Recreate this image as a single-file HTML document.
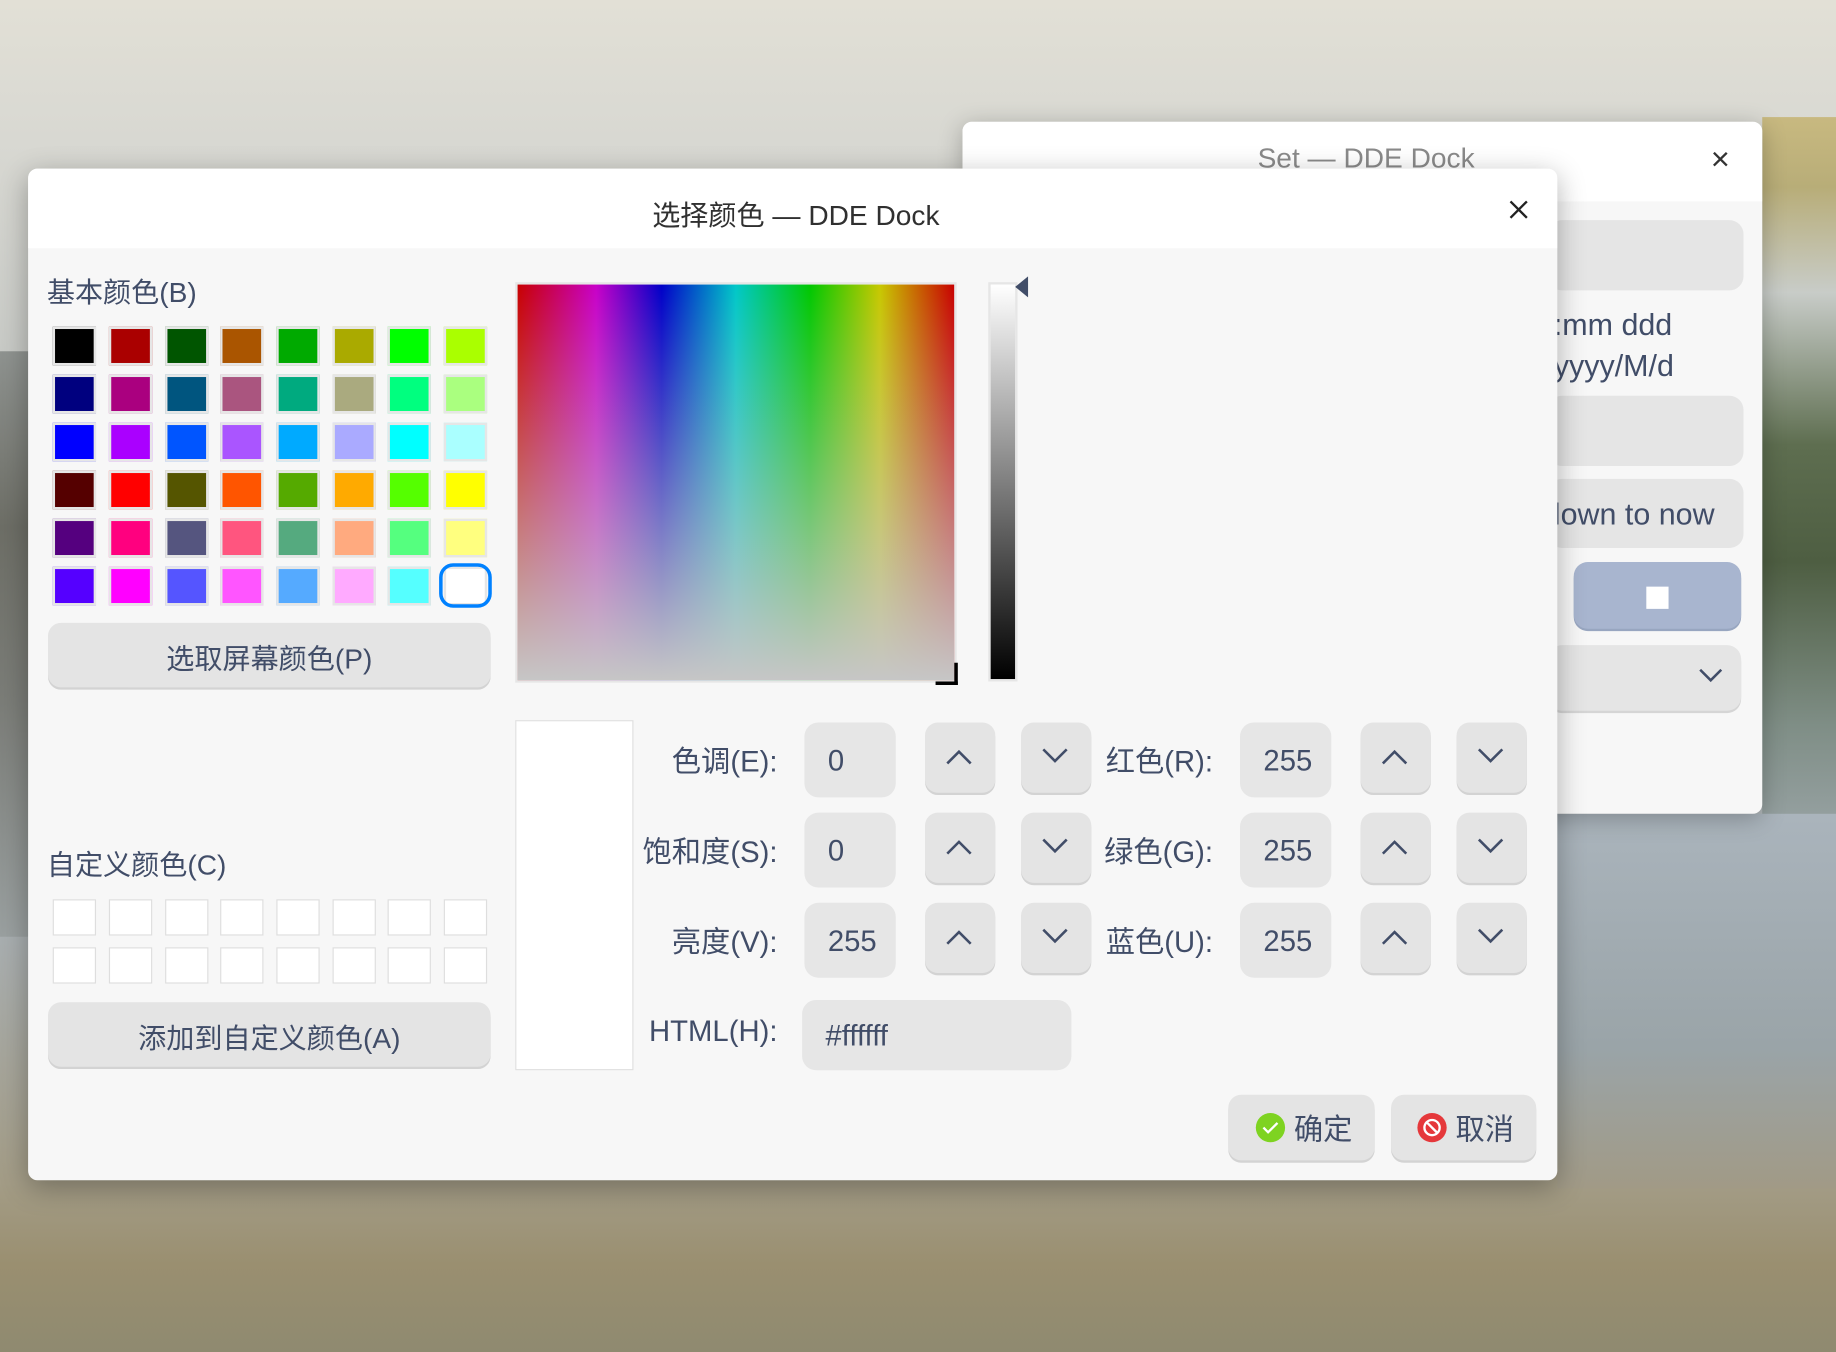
<!DOCTYPE html>
<html><head><meta charset="utf-8"><style>
html,body{margin:0;padding:0;width:1836px;height:1352px;overflow:hidden}
#w{position:absolute;left:0;top:0;width:1568px;height:1155px;transform:scale(1.17092);transform-origin:0 0;font-family:"Liberation Sans","Noto Sans CJK SC",sans-serif;color:#414d68;
background:
linear-gradient(180deg,#e2e0d6 0,#d8d8d2 120px,#c8cac6 300px,#b8bcbc 560px,#a9b0b4 780px,#a39c86 1010px,#9a8f70 1080px,#8f8a70 1155px);}
.a{position:absolute;box-sizing:border-box}
.t{position:absolute;white-space:nowrap}
.sw{position:absolute;width:37px;height:33px;border:2px solid #e6e6e6;box-sizing:border-box}
.cs{position:absolute;width:37px;height:31px;border:1px solid #dedede;background:#fff;box-sizing:border-box}
.btn{position:absolute;background:#e4e4e4;border-radius:11px;box-shadow:0 2px 0 #d3d3d3;box-sizing:border-box}
.inp{position:absolute;background:#e6e6e6;border-radius:12px;font-size:25px;line-height:64px;padding-left:20px;box-sizing:border-box}
.lb{position:absolute;font-size:25px;text-align:right;width:150px}
</style></head><body><div id="w">
<div class="a" style="left:0;top:300px;width:30px;height:500px;background:linear-gradient(180deg,#8f9390,#6d6e66 150px,#7b7d78 300px,#9aa0a0)"></div>
<div class="a" style="left:1505px;top:100px;width:63px;height:620px;background:linear-gradient(180deg,#c8b980 0,#b8ad78 60px,#c8ccc8 150px,#5e6e50 280px,#4e5e42 380px,#7f8e86 520px,#9aa4a6 620px)"></div>
<div class="a" style="left:1330px;top:695px;width:238px;height:320px;background:linear-gradient(180deg,#aab4bc,#9aa4a8 200px,#a19a86)"></div>

<div class="a" style="left:822px;top:104px;width:683px;height:591px;background:#f7f7f7;border-radius:8px;overflow:hidden;box-shadow:0 4px 20px rgba(0,0,0,.25)">
 <div class="a" style="left:0;top:0;width:683px;height:68px;background:#fff"></div>
 <div class="t" style="left:252px;top:18px;font-size:24px;color:#8a8a8a">Set — DDE Dock</div>
 <div class="t" style="left:639px;top:16px;font-size:28px;color:#333">×</div>
 <div class="a" style="left:500px;top:84px;width:167px;height:60px;background:#e5e5e5;border-radius:12px"></div>
 <div class="t" style="left:505px;top:158px;font-size:26px;color:#414d68">:mm ddd</div>
 <div class="t" style="left:505px;top:193px;font-size:26px;color:#414d68">yyyy/M/d</div>
 <div class="a" style="left:500px;top:234px;width:167px;height:60px;background:#e5e5e5;border-radius:12px"></div>
 <div class="a" style="left:500px;top:305px;width:167px;height:59px;background:#e5e5e5;border-radius:12px"></div>
 <div class="t" style="left:505px;top:320px;font-size:26px;color:#414d68">lown to now</div>
 <div class="a" style="left:522px;top:376px;width:143px;height:57px;background:#a8b5cf;border-radius:12px;box-shadow:0 2px 0 #98a6c0"></div>
 <div class="a" style="left:584px;top:397px;width:19px;height:19px;background:#fff"></div>
 <div class="a" style="left:500px;top:447px;width:165px;height:56px;background:#e5e5e5;border-radius:12px;box-shadow:0 2px 0 #d5d5d5"></div>
 <svg class="a" style="left:628px;top:466px" width="22" height="14"><path d="M2 2 L11 11 L20 2" stroke="#414d68" stroke-width="2.2" fill="none"/></svg>
</div>

<div class="a" style="left:24px;top:144px;width:1306px;height:864px;background:#f7f7f7;border-radius:8px;overflow:hidden;box-shadow:0 6px 24px rgba(0,0,0,.3)">
 <div class="a" style="left:0;top:0;width:1306px;height:68px;background:#fff"></div>
</div>
<div class="t" style="left:557px;top:164px;font-size:24px;color:#303030">选择颜色 — DDE Dock</div>
<svg class="a" style="left:1288px;top:170px" width="18" height="18"><path d="M2 2L16 16M16 2L2 16" stroke="#222" stroke-width="2"/></svg>

<div class="t" style="left:40px;top:230px;font-size:24px">基本颜色(B)</div>
<div class="sw" style="left:45px;top:279px;background:#000"></div><div class="sw" style="left:93px;top:279px;background:#aa0000"></div><div class="sw" style="left:141px;top:279px;background:#005500"></div><div class="sw" style="left:188px;top:279px;background:#aa5500"></div><div class="sw" style="left:236px;top:279px;background:#00aa00"></div><div class="sw" style="left:284px;top:279px;background:#aaaa00"></div><div class="sw" style="left:331px;top:279px;background:#00ff00"></div><div class="sw" style="left:379px;top:279px;background:#aaff00"></div>
<div class="sw" style="left:45px;top:320px;background:#00007f"></div><div class="sw" style="left:93px;top:320px;background:#aa007f"></div><div class="sw" style="left:141px;top:320px;background:#00557f"></div><div class="sw" style="left:188px;top:320px;background:#aa557f"></div><div class="sw" style="left:236px;top:320px;background:#00aa7f"></div><div class="sw" style="left:284px;top:320px;background:#aaaa7f"></div><div class="sw" style="left:331px;top:320px;background:#00ff7f"></div><div class="sw" style="left:379px;top:320px;background:#aaff7f"></div>
<div class="sw" style="left:45px;top:361px;background:#0000ff"></div><div class="sw" style="left:93px;top:361px;background:#aa00ff"></div><div class="sw" style="left:141px;top:361px;background:#0055ff"></div><div class="sw" style="left:188px;top:361px;background:#aa55ff"></div><div class="sw" style="left:236px;top:361px;background:#00aaff"></div><div class="sw" style="left:284px;top:361px;background:#aaaaff"></div><div class="sw" style="left:331px;top:361px;background:#00ffff"></div><div class="sw" style="left:379px;top:361px;background:#aaffff"></div>
<div class="sw" style="left:45px;top:402px;background:#550000"></div><div class="sw" style="left:93px;top:402px;background:#ff0000"></div><div class="sw" style="left:141px;top:402px;background:#555500"></div><div class="sw" style="left:188px;top:402px;background:#ff5500"></div><div class="sw" style="left:236px;top:402px;background:#55aa00"></div><div class="sw" style="left:284px;top:402px;background:#ffaa00"></div><div class="sw" style="left:331px;top:402px;background:#55ff00"></div><div class="sw" style="left:379px;top:402px;background:#ffff00"></div>
<div class="sw" style="left:45px;top:443px;background:#55007f"></div><div class="sw" style="left:93px;top:443px;background:#ff007f"></div><div class="sw" style="left:141px;top:443px;background:#55557f"></div><div class="sw" style="left:188px;top:443px;background:#ff557f"></div><div class="sw" style="left:236px;top:443px;background:#55aa7f"></div><div class="sw" style="left:284px;top:443px;background:#ffaa7f"></div><div class="sw" style="left:331px;top:443px;background:#55ff7f"></div><div class="sw" style="left:379px;top:443px;background:#ffff7f"></div>
<div class="sw" style="left:45px;top:484px;background:#5500ff"></div><div class="sw" style="left:93px;top:484px;background:#ff00ff"></div><div class="sw" style="left:141px;top:484px;background:#5555ff"></div><div class="sw" style="left:188px;top:484px;background:#ff55ff"></div><div class="sw" style="left:236px;top:484px;background:#55aaff"></div><div class="sw" style="left:284px;top:484px;background:#ffaaff"></div><div class="sw" style="left:331px;top:484px;background:#55ffff"></div><div class="sw" style="left:379px;top:484px;background:#fff"></div>
<div class="a" style="left:375px;top:481px;width:45px;height:38px;border:3px solid #0081ff;border-radius:12px"></div>

<div class="btn" style="left:41px;top:532px;width:378px;height:55px"></div>
<div class="t" style="left:41px;top:543px;width:378px;text-align:center;font-size:24px">选取屏幕颜色(P)</div>

<div class="a" style="left:440px;top:241px;width:377px;height:342px;border:2px solid #e6e6e6;background:linear-gradient(180deg,rgba(198,198,198,0) 0,rgba(198,198,198,1) 100%),linear-gradient(90deg,#c80000 0,#c800c8 18%,#0000c8 33%,#00c8c8 50%,#00c800 67%,#c8c800 83%,#c80000 100%)"></div>
<div class="a" style="left:799px;top:566px;width:19px;height:19px;border-right:3px solid #000;border-bottom:3px solid #000"></div>
<div class="a" style="left:844px;top:241px;width:25px;height:341px;border:2px solid #e6e6e6;background:linear-gradient(180deg,#fff,#000)"></div>
<svg class="a" style="left:867px;top:236px" width="12" height="18"><path d="M11 0 L11 18 L0 9 Z" fill="#414d68"/></svg>

<div class="t" style="left:40px;top:719px;font-size:24px">自定义颜色(C)</div>
<div class="cs" style="left:45px;top:768px"></div><div class="cs" style="left:93px;top:768px"></div><div class="cs" style="left:141px;top:768px"></div><div class="cs" style="left:188px;top:768px"></div><div class="cs" style="left:236px;top:768px"></div><div class="cs" style="left:284px;top:768px"></div><div class="cs" style="left:331px;top:768px"></div><div class="cs" style="left:379px;top:768px"></div>
<div class="cs" style="left:45px;top:809px"></div><div class="cs" style="left:93px;top:809px"></div><div class="cs" style="left:141px;top:809px"></div><div class="cs" style="left:188px;top:809px"></div><div class="cs" style="left:236px;top:809px"></div><div class="cs" style="left:284px;top:809px"></div><div class="cs" style="left:331px;top:809px"></div><div class="cs" style="left:379px;top:809px"></div>
<div class="btn" style="left:41px;top:856px;width:378px;height:55px"></div>
<div class="t" style="left:41px;top:867px;width:378px;text-align:center;font-size:24px">添加到自定义颜色(A)</div>

<div class="a" style="left:440px;top:615px;width:101px;height:299px;background:#fff;border:1px solid #e0e0e0"></div>

<div class="lb" style="left:514px;top:631px">色调(E):</div>
<div class="lb" style="left:514px;top:708px">饱和度(S):</div>
<div class="lb" style="left:514px;top:785px">亮度(V):</div>
<div class="lb" style="left:514px;top:867px">HTML(H):</div>
<div class="lb" style="left:886px;top:631px">红色(R):</div>
<div class="lb" style="left:886px;top:708px">绿色(G):</div>
<div class="lb" style="left:886px;top:785px">蓝色(U):</div>

<div class="inp" style="left:687px;top:617px;width:78px;height:64px;line-height:66px">0</div>
<div class="inp" style="left:687px;top:694px;width:78px;height:64px;line-height:66px">0</div>
<div class="inp" style="left:687px;top:771px;width:78px;height:64px;line-height:66px">255</div>
<div class="inp" style="left:1059px;top:617px;width:78px;height:64px;line-height:66px">255</div>
<div class="inp" style="left:1059px;top:694px;width:78px;height:64px;line-height:66px">255</div>
<div class="inp" style="left:1059px;top:771px;width:78px;height:64px;line-height:66px">255</div>
<div class="inp" style="left:685px;top:854px;width:230px;height:60px;line-height:62px">#ffffff</div>

<div class="btn" style="left:790px;top:617px;width:60px;height:60px"></div><div class="btn" style="left:872px;top:617px;width:60px;height:60px"></div>
<div class="btn" style="left:790px;top:694px;width:60px;height:60px"></div><div class="btn" style="left:872px;top:694px;width:60px;height:60px"></div>
<div class="btn" style="left:790px;top:771px;width:60px;height:60px"></div><div class="btn" style="left:872px;top:771px;width:60px;height:60px"></div>
<div class="btn" style="left:1162px;top:617px;width:60px;height:60px"></div><div class="btn" style="left:1244px;top:617px;width:60px;height:60px"></div>
<div class="btn" style="left:1162px;top:694px;width:60px;height:60px"></div><div class="btn" style="left:1244px;top:694px;width:60px;height:60px"></div>
<div class="btn" style="left:1162px;top:771px;width:60px;height:60px"></div><div class="btn" style="left:1244px;top:771px;width:60px;height:60px"></div>
<svg class="a" style="left:0;top:0" width="1568" height="1155">
<g stroke="#414d68" stroke-width="2.2" fill="none">
<path d="M809 652l10-10 10 10M891 640l10 10 10-10"/>
<path d="M809 729l10-10 10 10M891 717l10 10 10-10"/>
<path d="M809 806l10-10 10 10M891 794l10 10 10-10"/>
<path d="M1181 652l10-10 10 10M1263 640l10 10 10-10"/>
<path d="M1181 729l10-10 10 10M1263 717l10 10 10-10"/>
<path d="M1181 806l10-10 10 10M1263 794l10 10 10-10"/>
</g></svg>

<div class="btn" style="left:1049px;top:935px;width:125px;height:56px"></div>
<div class="btn" style="left:1188px;top:935px;width:124px;height:56px"></div>
<svg class="a" style="left:1072px;top:950px" width="26" height="26"><circle cx="13" cy="13" r="12.5" fill="#7ed321"/><path d="M7 13l4 4 8-8" stroke="#fff" stroke-width="2" fill="none"/></svg>
<div class="t" style="left:1105px;top:945px;font-size:25px">确定</div>
<svg class="a" style="left:1210px;top:950px" width="26" height="26"><circle cx="13" cy="13" r="12.5" fill="#e5383b"/><circle cx="13" cy="13" r="6.5" stroke="#fff" stroke-width="2" fill="none"/><path d="M8.5 8.5l9 9" stroke="#fff" stroke-width="2"/></svg>
<div class="t" style="left:1243px;top:945px;font-size:25px">取消</div>
</div></body></html>
